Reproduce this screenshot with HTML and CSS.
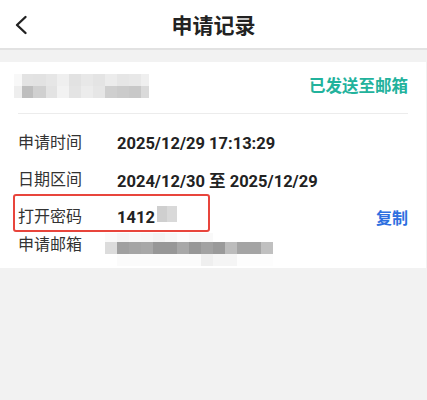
FILE: index.html
```html
<!DOCTYPE html>
<html lang="zh-CN">
<head>
    <meta charset="UTF-8">
    <meta name="viewport" content="width=device-width, initial-scale=1.0">
    <title>申请记录</title>
    <link rel="stylesheet" href="styles.css">
</head>
<body>
    <header class="top-bar">
        <a class="back" href="#">
            <svg width="14" height="20" viewBox="0 0 14 20">
                <path d="M11.5 2 L3 10 L11.5 18" fill="none" stroke="#222" stroke-width="2.4" stroke-linecap="round" stroke-linejoin="round"/>
            </svg>
        </a>
        <h1>申请记录</h1>
        <span></span>
    </header>

    <div class="record-card">
        <div class="record-head">
            <div class="blur blur-name"></div>
            <span class="sent">已发送至邮箱</span>
        </div>
        <div class="record-body">
            <div class="row">
                <span class="label">申请时间</span>
                <span class="value">2025/12/29 17:13:29</span>
            </div>
            <div class="row">
                <span class="label">日期区间</span>
                <span class="value">2024/12/30 至 2025/12/29</span>
            </div>
            <div class="row">
                <span class="label">打开密码</span>
                <span class="value">1412<i class="blur blur-code"></i></span>
                <a class="copy" href="#">复制</a>
            </div>
            <div class="row row-mail">
                <span class="label">申请邮箱</span>
                <div class="blur blur-mail"></div>
            </div>
        </div>
        <div class="mark"></div>
    </div>
</body>
</html>
```

FILE: styles.css
```css
body {
    margin: 0;
    background-color: #f2f2f2;
    font-family: "Roboto", "Noto Sans CJK SC", sans-serif;
    color: #333;
}
.top-bar {
    display: grid;
    grid-template-columns: 1fr auto 1fr;
    align-items: center;
    height: 48px;
    background-color: white;
    border-bottom: 2px solid #e2e2e2;
}
.back {
    display: flex;
    padding-left: 14px;
    padding-top: 1px;
}
.top-bar h1 {
    margin: 0;
    font-size: 21px;
    font-weight: 700;
    color: #222;
}
.record-card {
    position: relative;
    margin: 12px 1px 0 0;
    padding: 0 18px 2px;
    background-color: white;
}
.record-head {
    display: flex;
    justify-content: space-between;
    align-items: flex-start;
    height: 51px;
    border-bottom: 1px solid #ececec;
}
.sent {
    margin-top: 13px;
    font-size: 16.5px;
    line-height: 24px;
    font-weight: 700;
    color: #22b29c;
}
.blur {
    display: block;
}
.blur-name {
    margin: 12px 0 0 -4px;
    width: 135px;
    height: 24px;
    background:
        linear-gradient(to right, #f8f8f8 0 8px, #e3e3e3 8px 19px, #e2e2e2 19px 32px, #e6e6e6 32px 43px, #efefef 43px 55px, #e2e2e2 55px 67px, #e8e8e8 67px 79px, #e4e4e4 79px 91px, #ececec 91px 103px, #e6e6e6 103px 115px, #e8e8e8 115px 127px, #efefef 127px 135px) top / 100% 12px no-repeat,
        linear-gradient(to right, #eeeeee 0 8px, #bebebe 8px 19px, #d0d0d0 19px 32px, #e3e3e3 32px 43px, #f2f2f2 43px 55px, #e4e4e4 55px 67px, #ececec 67px 79px, #e6e6e6 79px 91px, #cfcfcf 91px 103px, #cbcbcb 103px 115px, #c8c8c8 115px 127px, #dadada 127px 135px) bottom / 100% 12px no-repeat;
}
.record-body {
    padding-top: 17px;
}
.row {
    display: flex;
    align-items: center;
    height: 24px;
    margin-bottom: 13px;
}
.label {
    width: 99px;
    font-size: 16px;
    line-height: 24px;
    flex-shrink: 0;
}
.value {
    display: flex;
    align-items: center;
    flex: 1;
    font-size: 16.5px;
    font-weight: 700;
    color: #222;
}
.blur-code {
    margin: -7px 0 0 2px;
    width: 20px;
    height: 16px;
    background: linear-gradient(to right, #cfcfcf 0 10px, #d9d9d9 10px 20px);
}
.copy {
    font-size: 16px;
    font-weight: 700;
    color: #2d6fe0;
    text-decoration: none;
}
.row-mail {
    align-items: flex-start;
    height: 33px;
    margin-top: -9px;
    margin-bottom: 0;
}
.blur-mail {
    margin-left: -12px;
    width: 168px;
    height: 33px;
    background:
        linear-gradient(to right, #fafafa 0 12px, #f5f5f5 12px 24px, #f8f8f8 24px 36px, #f7f7f7 36px 48px, #f3f3f3 48px 60px, #f7f7f7 60px 72px, #fcfcfc 72px 84px, #f8f8f8 84px 96px, #f9f9f9 96px 108px, #ffffff 108px) top / 100% 9px no-repeat,
        linear-gradient(to right, #dcdcdc 0 12px, #a0a0a0 12px 24px, #a5a5a5 24px 36px, #a8a8a8 36px 48px, #979797 48px 60px, #979797 60px 72px, #a8a8a8 72px 84px, #979797 84px 96px, #a2a2a2 96px 108px, #9a9a9a 108px 120px, #bcbcbc 120px 132px, #a4a4a4 132px 156px, #c0c0c0 156px 168px) 0 9px / 100% 12px no-repeat,
        linear-gradient(to right, #ffffff 0 12px, #fbfbfb 12px 96px, #efefef 96px 108px, #f5f5f5 108px 132px, #fdfdfd 132px 168px) bottom / 100% 12px no-repeat;
}
.mark {
    position: absolute;
    left: 13px;
    top: 132px;
    width: 193px;
    height: 34px;
    border: 2px solid #e8453c;
    border-radius: 3px;
}
```
